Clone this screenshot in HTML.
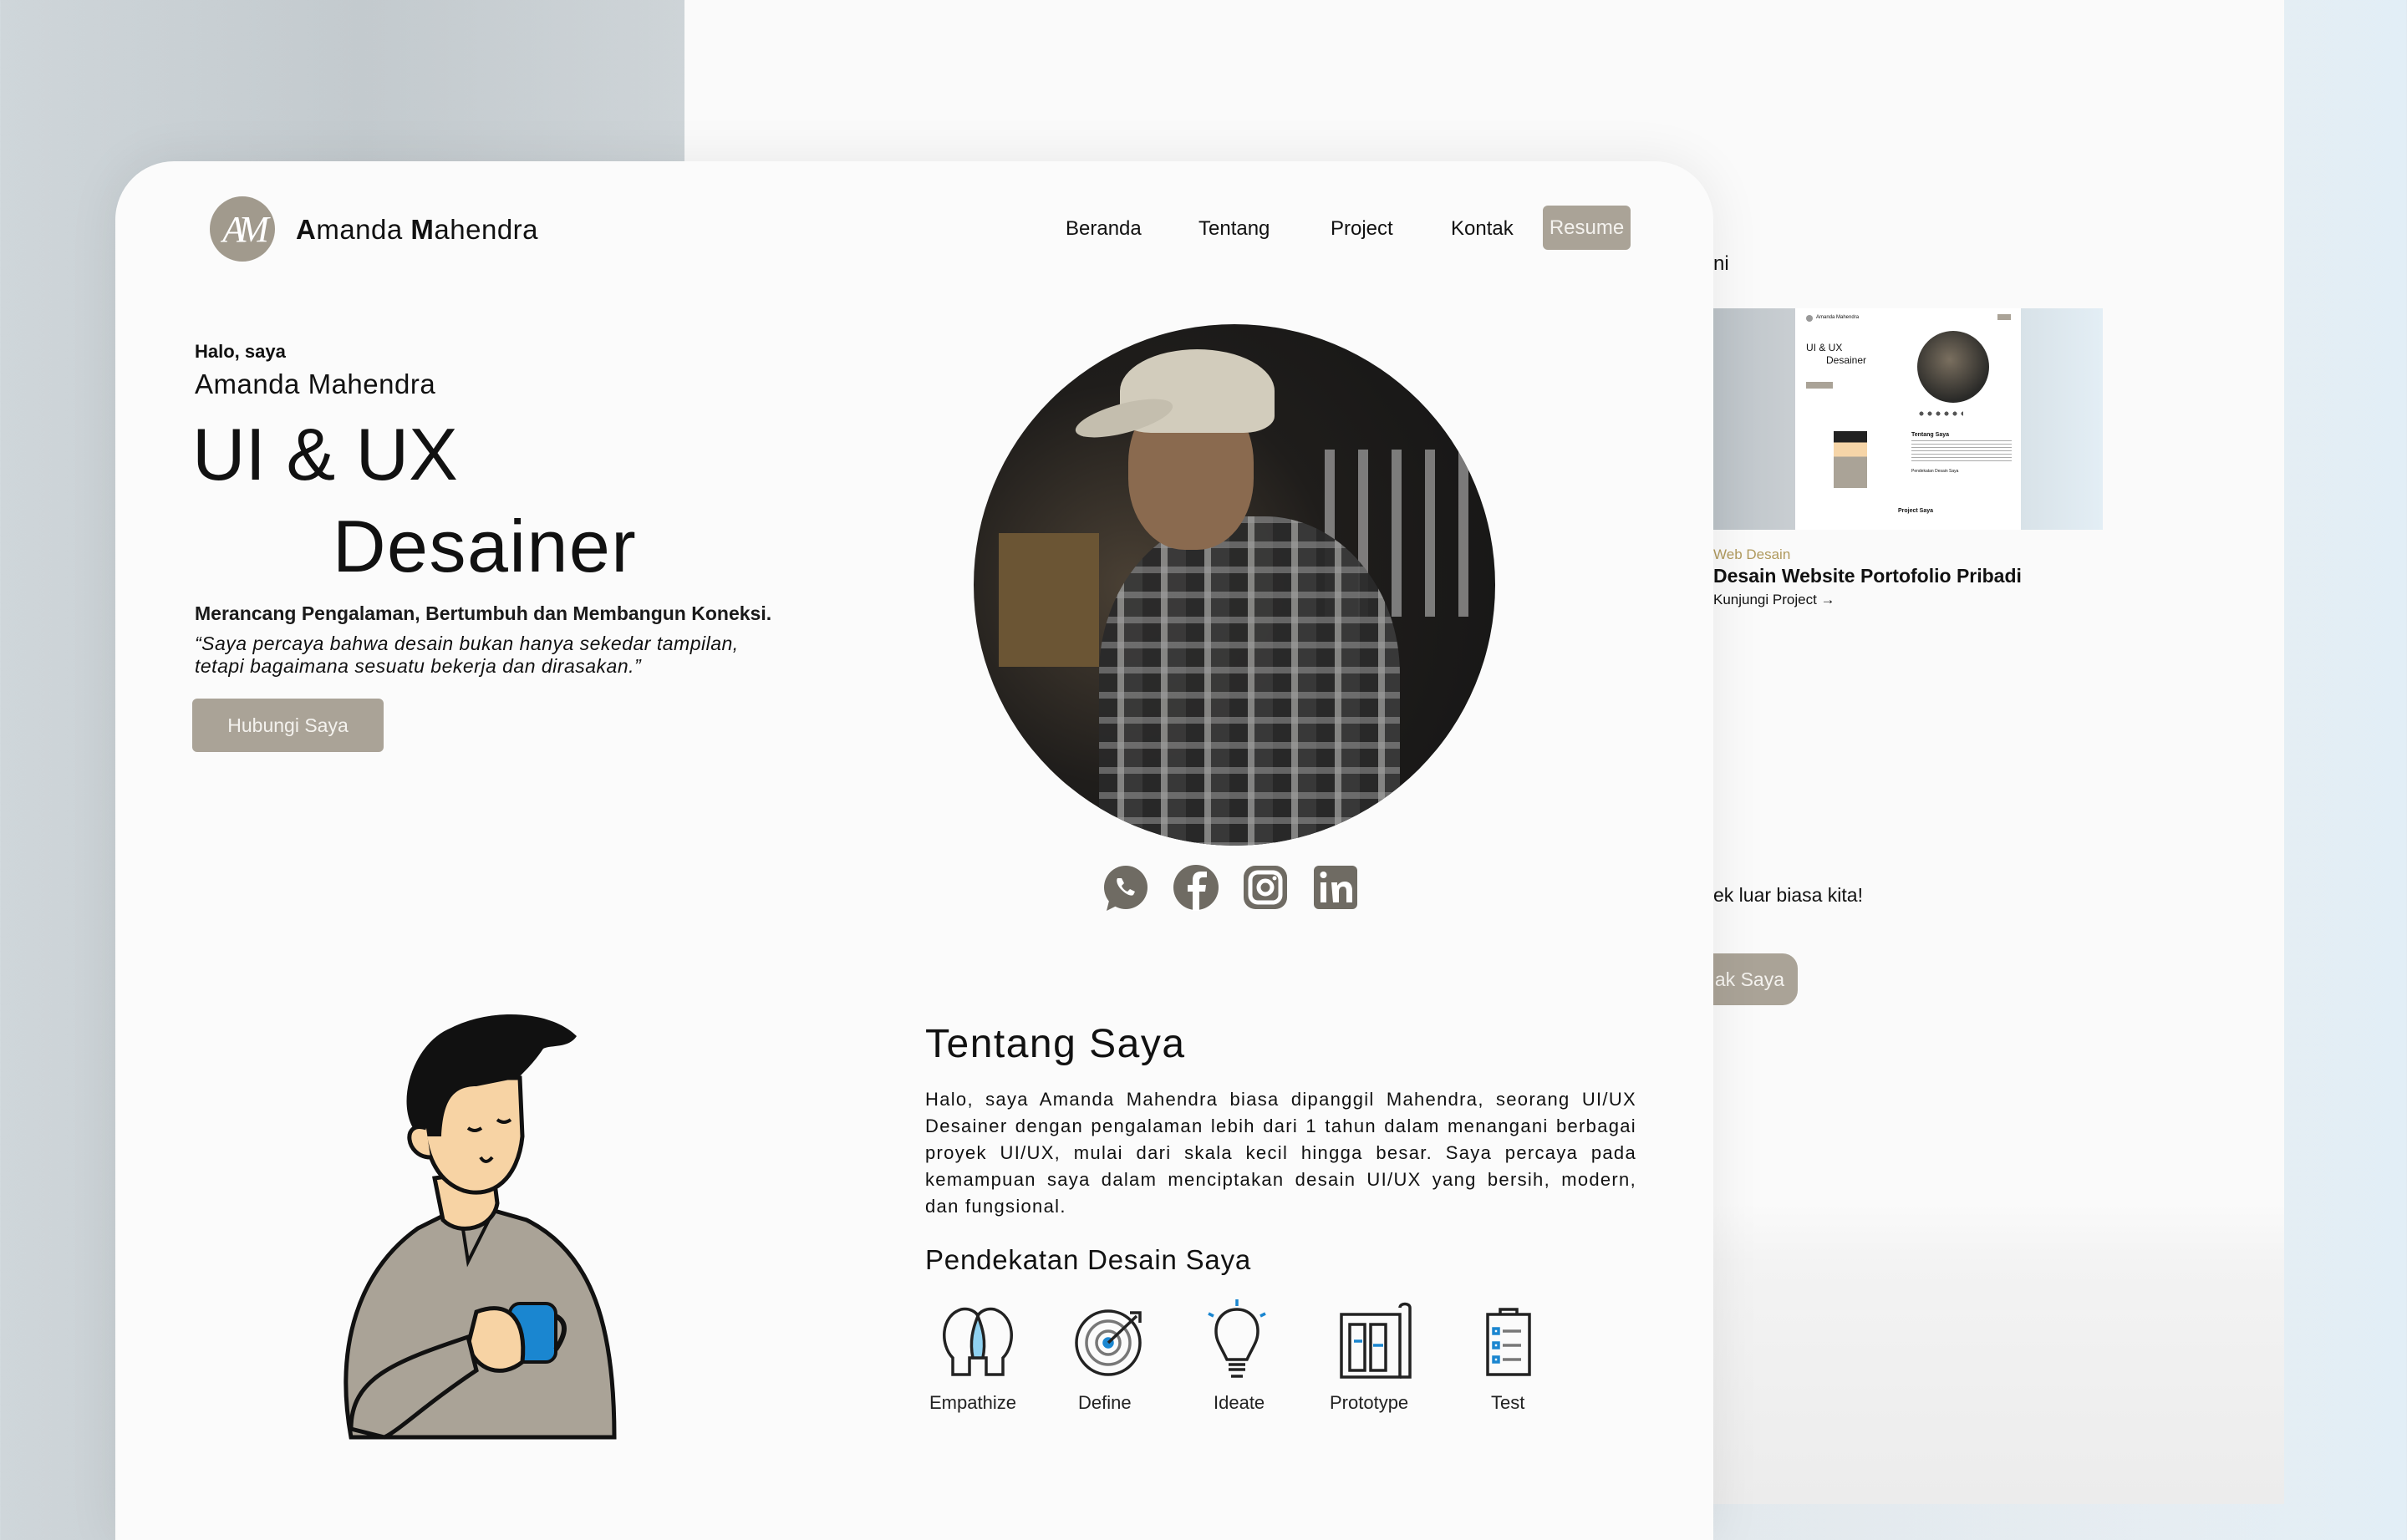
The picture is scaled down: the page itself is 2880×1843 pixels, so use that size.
<!DOCTYPE html>
<html><head><meta charset="utf-8"><style>
*{margin:0;padding:0;box-sizing:border-box}
body{width:2880px;height:1800px;overflow:hidden;position:relative;font-family:"Liberation Sans",sans-serif;color:#111;
background:linear-gradient(90deg,#cfd6da 0%,#c3cace 15%,#dfe4e7 50%,#e6edf2 90%,#e2eef6 100%)}
.a{position:absolute;white-space:nowrap}
#back{left:819px;top:0;width:1914px;height:1800px;background:linear-gradient(180deg,#fafafa 0%,#fafafa 80%,#f3f3f3 84%,#ececec 100%)}
#card{left:138px;top:193px;width:1912px;height:1650px;background:#fbfbfb;border-radius:70px 70px 0 0;box-shadow:0 0 60px rgba(0,0,0,.08)}
.nav{font-size:24px;top:260px}
.btn{background:#aaa397;color:#f4f2ee;border-radius:6px;display:flex;align-items:center;justify-content:center}
.p{font-size:22px;line-height:32px;text-align:justify;text-align-last:left;white-space:normal;letter-spacing:1.3px}
.lbl{font-size:22px;top:1666px;color:#222}
</style></head><body>
<div class="a" id="back"></div>
<div class="a" style="left:2050px;top:302px;font-size:24px">ni</div>
<div class="a" style="left:2050px;top:369px;width:466px;height:265px;background:linear-gradient(90deg,#bcc3c8 0%,#c9ced2 21%,#fff 21%,#fff 79%,#d8e2e8 79%,#e3eef5 100%)"></div>
<div class="a" style="left:2149px;top:369px;width:268px;height:265px;background:#fff">
  <div class="a" style="left:12px;top:8px;width:8px;height:8px;border-radius:50%;background:#999"></div>
  <div class="a" style="left:24px;top:8px;font-size:6px">Amanda Mahendra</div>
  <div class="a" style="left:241px;top:7px;width:16px;height:7px;background:#aaa397"></div>
  <div class="a" style="left:12px;top:40px;font-size:12px">UI &amp; UX</div>
  <div class="a" style="left:36px;top:55px;font-size:12px">Desainer</div>
  <div class="a" style="left:12px;top:88px;width:32px;height:8px;background:#aaa397"></div>
  <div class="a" style="left:145px;top:27px;width:86px;height:86px;border-radius:50%;background:radial-gradient(circle at 45% 40%,#7a6f5f,#2a2a28 70%)"></div>
  <div class="a" style="left:145px;top:123px;width:55px;height:6px;background:radial-gradient(circle,#555 40%,transparent 45%) 0 0/10px 6px"></div>
  <div class="a" style="left:45px;top:147px;width:40px;height:68px;background:linear-gradient(180deg,#222 0 20%,#f6d5a8 20% 45%,#aaa397 45%)"></div>
  <div class="a" style="left:138px;top:148px;font-size:7px;font-weight:bold">Tentang Saya</div>
  <div class="a" style="left:138px;top:158px;width:120px;height:26px;background:repeating-linear-gradient(180deg,#aaa 0 1px,transparent 1px 4px)"></div>
  <div class="a" style="left:138px;top:192px;font-size:5px">Pendekatan Desain Saya</div>
  <div class="a" style="left:122px;top:239px;font-size:7px;font-weight:bold">Project Saya</div>
</div>
<div class="a" style="left:2050px;top:654px;font-size:17px;color:#b09a5e">Web Desain</div>
<div class="a" style="left:2050px;top:676px;font-size:23px;font-weight:bold;color:#111">Desain Website Portofolio Pribadi</div>
<div class="a" style="left:2050px;top:708px;font-size:17px">Kunjungi Project →</div>
<div class="a" style="left:2050px;top:1058px;font-size:23px">ek luar biasa kita!</div>
<div class="a btn" style="left:2030px;top:1141px;width:121px;height:62px;border-radius:18px;font-size:23px;justify-content:flex-end;padding-right:16px">ak Saya</div>

<div class="a" id="card"></div>
<div class="a" style="left:251px;top:235px;width:78px;height:78px;border-radius:50%;background:#a19a8d;color:#fff;font-family:'Liberation Serif',serif;font-style:italic;font-size:44px;display:flex;align-items:center;justify-content:center;letter-spacing:-8px">AM</div>
<div class="a" style="left:354px;top:256px;font-size:33px;color:#111;letter-spacing:.5px"><b>A</b>manda <b>M</b>ahendra</div>
<div class="a nav" style="left:1275px">Beranda</div>
<div class="a nav" style="left:1434px">Tentang</div>
<div class="a nav" style="left:1592px">Project</div>
<div class="a nav" style="left:1736px">Kontak</div>
<div class="a btn" style="left:1846px;top:246px;width:105px;height:53px;font-size:24px">Resume</div>

<div class="a" style="left:233px;top:408px;font-size:22px;font-weight:bold">Halo, saya</div>
<div class="a" style="left:233px;top:441px;font-size:33px;letter-spacing:.5px">Amanda Mahendra</div>
<div class="a" style="left:230px;top:493px;font-size:88px">UI &amp; UX</div>
<div class="a" style="left:398px;top:603px;font-size:88px;letter-spacing:1.5px">Desainer</div>
<div class="a" style="left:233px;top:721px;font-size:23px;font-weight:bold;color:#1a1a1a">Merancang Pengalaman, Bertumbuh dan Membangun Koneksi.</div>
<div class="a" style="left:233px;top:757px;font-size:23px;font-style:italic;line-height:27px;letter-spacing:.5px">“Saya percaya bahwa desain bukan hanya sekedar tampilan,<br>tetapi bagaimana sesuatu bekerja dan dirasakan.”</div>
<div class="a btn" style="left:230px;top:836px;width:229px;height:64px;font-size:23px">Hubungi Saya</div>

<div class="a" style="left:1165px;top:388px;width:624px;height:624px;border-radius:50%;overflow:hidden;background:radial-gradient(circle at 30% 50%,#4a4034 0%,#1f1d1b 45%,#151515 100%)">
  <div class="a" style="left:30px;top:250px;width:120px;height:160px;background:#6b5534"></div>
  <div class="a" style="left:420px;top:150px;width:180px;height:200px;background:repeating-linear-gradient(90deg,#ddd 0 12px,transparent 12px 40px);opacity:.5"></div>
  <div class="a" style="left:150px;top:230px;width:360px;height:420px;border-radius:45% 45% 0 0;background:repeating-linear-gradient(90deg,#2a2a2a 0 22px,#8a8a88 22px 30px,#3a3a3a 30px 52px),#444;opacity:.95"></div>
  <div class="a" style="left:150px;top:230px;width:360px;height:420px;border-radius:45% 45% 0 0;background:repeating-linear-gradient(0deg,transparent 0 22px,rgba(160,160,160,.5) 22px 30px)"></div>
  <div class="a" style="left:185px;top:80px;width:150px;height:190px;border-radius:45%;background:#8a6a4f"></div>
  <div class="a" style="left:175px;top:30px;width:185px;height:100px;border-radius:50% 50% 20% 20%;background:#d2ccbc"></div>
  <div class="a" style="left:120px;top:95px;width:120px;height:35px;border-radius:50%;background:#c4beae;transform:rotate(-15deg)"></div>
</div>
<svg class="a" style="left:1318px;top:1034px" width="310" height="58" viewBox="0 0 310 58">
 <g fill="#6f6b63">
  <circle cx="29" cy="28" r="26"/><path d="M6 56 L10 40 L22 48Z"/>
  <circle cx="113" cy="28" r="27"/>
  <rect x="170" y="2" width="52" height="52" rx="14"/>
  <rect x="254" y="2" width="52" height="52" rx="6"/>
 </g>
 <path d="M19 17c-2 3 0 9 5 14s11 8 14 6l2-4-6-3-3 3c-3-1-6-4-7-7l3-3-3-6z" fill="#fff"/>
 <path d="M117 56V33h7l1-8h-8v-5c0-2 1-4 4-4h5v-7h-7c-7 0-10 4-10 10v6h-6v8h6v23z" fill="#fff"/>
 <rect x="178" y="10" width="36" height="36" rx="9" fill="none" stroke="#fff" stroke-width="5"/>
 <circle cx="196" cy="28" r="8" fill="none" stroke="#fff" stroke-width="5"/><circle cx="207" cy="17" r="2.5" fill="#fff"/>
 <rect x="262" y="22" width="7" height="24" fill="#fff"/><circle cx="265.5" cy="13" r="4" fill="#fff"/>
 <path d="M275 22h7v4c2-3 5-5 9-5 6 0 9 4 9 11v14h-7V33c0-4-1-6-4-6s-5 2-5 6v13h-7z" fill="#fff"/>
</svg>

<svg class="a" style="left:390px;top:1210px" width="360" height="520" viewBox="0 0 360 520">
 <path d="M30 510 C10 400 40 310 110 260 L170 230 L240 250 C320 290 345 380 345 510 Z" fill="#aaa397" stroke="#111" stroke-width="5"/>
 <path d="M160 235 L170 300 L200 240" fill="none" stroke="#111" stroke-width="4"/>
 <path d="M130 200 L140 250 C160 270 200 260 205 230 L200 190 Z" fill="#f7d3a4" stroke="#111" stroke-width="5"/>
 <path d="M120 80 C110 140 120 200 165 215 C200 225 230 200 235 150 L232 80 Z" fill="#f7d3a4" stroke="#111" stroke-width="5"/>
 <path d="M112 150 C80 120 100 40 150 20 C200 -5 270 0 300 30 C290 45 270 40 260 45 C250 60 240 70 230 80 L180 90 C150 90 140 110 138 150 Z" fill="#111"/>
 <path d="M120 140 C90 130 95 175 125 175" fill="#f7d3a4" stroke="#111" stroke-width="5"/>
 <path d="M170 140 q8 6 16 0 M205 130 q8 6 16 0 M185 175 q6 10 14 0" fill="none" stroke="#111" stroke-width="4"/>
 <rect x="220" y="350" width="55" height="70" rx="12" fill="#1a86d0" stroke="#111" stroke-width="4"/>
 <path d="M275 365 q20 10 0 40" fill="none" stroke="#111" stroke-width="6"/>
 <path d="M180 360 C220 345 240 370 235 420 C210 440 180 430 170 400 Z" fill="#f7d3a4" stroke="#111" stroke-width="5"/>
 <path d="M30 500 C30 440 80 420 170 390 L180 430 C120 470 90 500 70 510Z" fill="#aaa397" stroke="#111" stroke-width="5"/>
</svg>

<div class="a" style="left:1107px;top:1222px;font-size:48px;letter-spacing:1.5px">Tentang Saya</div>
<div class="a p" style="left:1107px;top:1300px;width:851px">Halo, saya Amanda Mahendra biasa dipanggil Mahendra, seorang UI/UX Desainer dengan pengalaman lebih dari 1 tahun dalam menangani berbagai proyek UI/UX, mulai dari skala kecil hingga besar. Saya percaya pada kemampuan saya dalam menciptakan desain UI/UX yang bersih, modern, dan fungsional.</div>
<div class="a" style="left:1107px;top:1489px;font-size:33px;letter-spacing:.8px">Pendekatan Desain Saya</div>

<svg class="a" style="left:1120px;top:1555px" width="740" height="100" viewBox="0 0 740 100" fill="none" stroke="#222" stroke-width="3.5">
 <path d="M20 90 V70 C5 55 5 20 30 12 C40 10 48 15 50 20 C52 15 60 10 70 12 C95 20 95 55 80 70 V90 H60 V70 H40 V90Z"/>
 <path d="M50 20 C44 35 40 50 44 70 H56 C60 50 56 35 50 20Z" fill="#8fd1f0"/>
 <circle cx="206" cy="52" r="38"/><circle cx="206" cy="52" r="26" stroke="#777"/><circle cx="206" cy="52" r="14" stroke="#777"/><circle cx="206" cy="52" r="5" fill="#1a86d0" stroke="#1a86d0"/>
 <path d="M206 52 L240 20 M232 16 L244 16 L244 28"/>
 <path d="M353 92 h14 M350 84 h20 M350 78 h20 M348 72 C340 55 335 50 335 38 C335 22 346 12 360 12 C374 12 385 22 385 38 C385 50 380 55 372 72 Z"/>
 <path d="M360 0 v8 M332 20 l-6-3 M388 20 l6-3" stroke="#1a86d0"/>
 <rect x="485" y="18" width="70" height="75"/><path d="M555 93 h12 V10 c0-6-12-6-12 0 M495 30 h18 v55 h-18z M520 30 h18 v55 h-18z"/>
 <path d="M500 50 h10 M523 55 h12" stroke="#1a86d0"/>
 <rect x="660" y="18" width="50" height="72"/><path d="M675 18 v-6 h20 v6"/>
 <path d="M667 35 h6 v6 h-6z M667 52 h6 v6 h-6z M667 69 h6 v6 h-6z" stroke="#1a86d0"/><path d="M678 38 h22 M678 55 h22 M678 72 h22" stroke="#777"/>
</svg>
<div class="a lbl" style="left:1112px">Empathize</div>
<div class="a lbl" style="left:1290px">Define</div>
<div class="a lbl" style="left:1452px">Ideate</div>
<div class="a lbl" style="left:1591px">Prototype</div>
<div class="a lbl" style="left:1784px">Test</div>
</body></html>
